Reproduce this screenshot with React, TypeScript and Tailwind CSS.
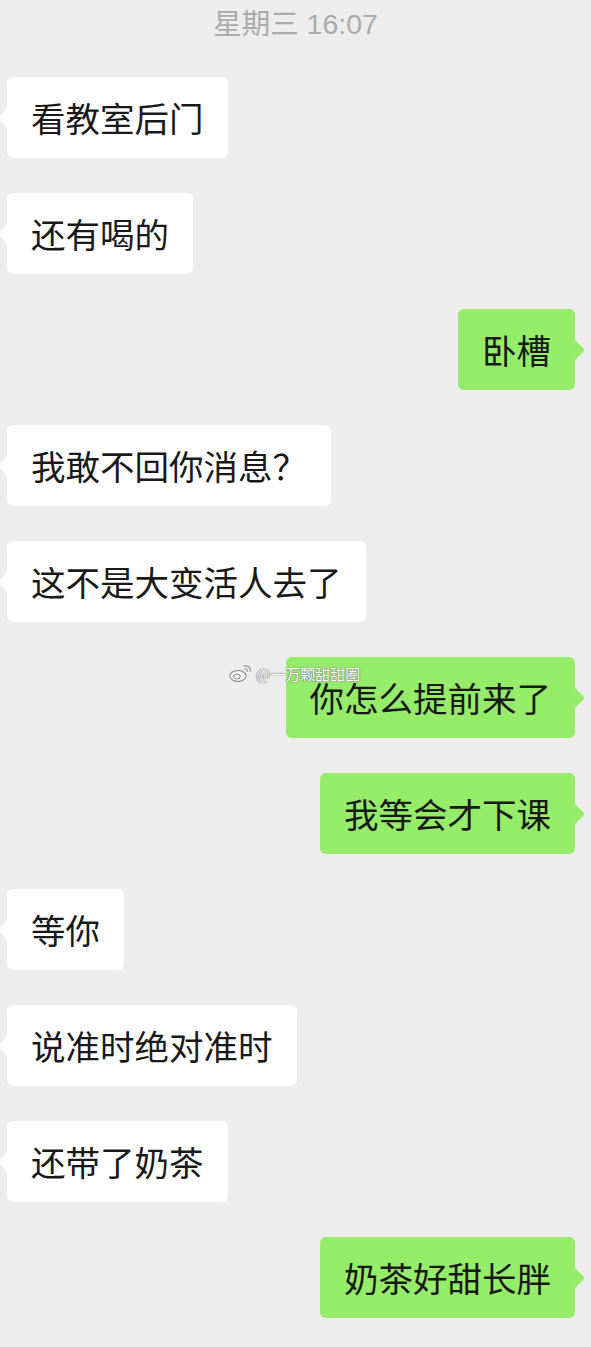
import React from 'react';

type Msg = { text: string; me?: boolean };

const messages: Msg[] = [
  { text: '看教室后门' },
  { text: '还有喝的' },
  { text: '卧槽', me: true },
  { text: '我敢不回你消息？' },
  { text: '这不是大变活人去了' },
  { text: '你怎么提前来了', me: true },
  { text: '我等会才下课', me: true },
  { text: '等你' },
  { text: '说准时绝对准时' },
  { text: '还带了奶茶' },
  { text: '奶茶好甜长胖', me: true },
];

const font = { fontFamily: '"PingFang SC", "Noto Sans CJK SC", "Noto Sans", sans-serif' };

function Bubble({ text, me }: Msg) {
  return (
    <div className={me ? 'flex justify-end pr-[16px]' : 'flex justify-start pl-[7px]'}>
      <div
        className={
          'relative h-[81px] px-[24px] flex items-center rounded-[6px] text-[34.5px] text-[#191919] ' +
          (me ? 'bg-[#95ec69]' : 'bg-white')
        }
      >
        {me ? (
          <svg className="absolute right-[-10px] top-1/2 -translate-y-1/2" width="11" height="22" viewBox="0 0 11 22">
            <path d="M0 0 L9 9 Q11 11 9 13 L0 22 Z" fill="#95ec69" />
          </svg>
        ) : (
          <svg className="absolute left-[-9px] top-1/2 -translate-y-1/2" width="10" height="22" viewBox="0 0 10 22">
            <path d="M10 0 L2 9 Q0 11 2 13 L10 22 Z" fill="#ffffff" />
          </svg>
        )}
        <span className="whitespace-nowrap leading-none">{text}</span>
      </div>
    </div>
  );
}

function Watermark() {
  return (
    <div className="absolute left-[229px] top-[663px] flex items-center gap-[3px] pointer-events-none">
      <svg width="24" height="20" viewBox="0 0 24 20">
        <ellipse cx="9" cy="13" rx="8" ry="5.5" fill="#ffffff" stroke="#9a9a9a" strokeWidth="1.3" />
        <ellipse cx="8" cy="13.5" rx="3.2" ry="2.4" fill="none" stroke="#9a9a9a" strokeWidth="1.2" />
        <path d="M15 3 Q21 2 21.5 8" fill="none" stroke="#9a9a9a" strokeWidth="1.4" strokeLinecap="round" />
        <path d="M15.5 6 Q18.5 5.5 18.5 8.5" fill="none" stroke="#9a9a9a" strokeWidth="1.2" strokeLinecap="round" />
      </svg>
      <span
        className="text-[15px] text-white leading-none"
        style={{ ...font, textShadow: '0 0 1px #777, 0 0 1px #777, 0 0 1px #777' }}
      >
        @一万颗甜甜圈
      </span>
    </div>
  );
}

export default function App() {
  return (
    <div className="relative w-[591px] h-[1347px] bg-[#ededed] overflow-hidden" style={font}>
      <div
        className="h-[48px] flex items-center justify-center text-[28.5px] text-[#ababab]"
        style={{ fontFamily: '"Liberation Sans", "Noto Sans CJK SC", sans-serif' }}
      >
        星期三 16:07
      </div>
      <div className="mt-[29px] flex flex-col gap-[35px]">
        {messages.map((m, i) => (
          <Bubble key={i} {...m} />
        ))}
      </div>
      <Watermark />
    </div>
  );
}
